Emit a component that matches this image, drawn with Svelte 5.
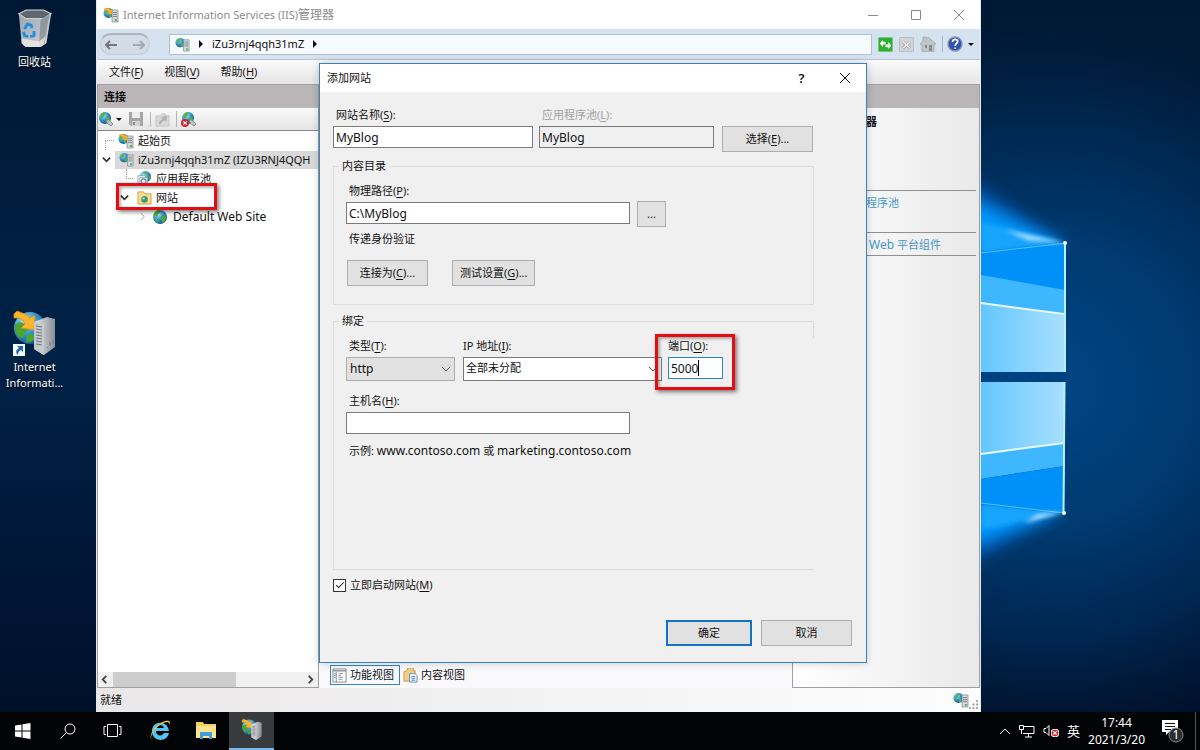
<script>
	let siteName = $state('MyBlog');
	let pool = $state('MyBlog');
	let path = $state('C:\\MyBlog');
	let type = $state('http');
	let ip = $state('全部未分配');
	let port = $state('5000');
	let host = $state('');
	let startNow = $state(true);

	const menus = [
		['文件', 'F'],
		['视图', 'V'],
		['帮助', 'H']
	];
</script>

{#snippet icon(name, size)}
	<svg class="icon" width={size} height={size} aria-hidden="true"><use href="#{name}" /></svg>
{/snippet}

{#snippet key(text, k, tail = '')}{text}(<u>{k}</u>){tail}{/snippet}

<svg class="defs" aria-hidden="true">
	<defs>
		<radialGradient id="sea" cx="35%" cy="30%" r="75%">
			<stop offset="0" stop-color="#b5ecfb" />
			<stop offset="0.5" stop-color="#3497d2" />
			<stop offset="1" stop-color="#164e97" />
		</radialGradient>
		<linearGradient id="metal" x1="0" x2="1" y1="0" y2="0">
			<stop offset="0" stop-color="#e6e8ea" />
			<stop offset="1" stop-color="#8b9095" />
		</linearGradient>
		<linearGradient id="bin" x1="0" x2="1" y1="0" y2="1">
			<stop offset="0" stop-color="#9aa2ab" />
			<stop offset="0.6" stop-color="#b9bfc5" />
			<stop offset="1" stop-color="#e3e3e1" />
		</linearGradient>
	</defs>
	<symbol id="globe" viewBox="0 0 16 16">
		<circle cx="8" cy="8" r="7" fill="url(#sea)" />
		<path d="M3 3c2-2 5-2 6-1L8 4 6 5 5 8 2 7c-1-1 0-3 1-4zM9 7l3-1 2 2-1 4-2 2-2-3zM4 10l3 1-1 3-3-2z" fill="#4eaa3c" />
	</symbol>
	<symbol id="tower" viewBox="0 0 16 16">
		<circle cx="5.500" cy="6" r="5" fill="url(#sea)" />
		<path d="M2 4c1-2 3-3 4-2L5 5 4 6 2 7zM6 7l3 0-1 3-2 0z" fill="#52b54a" />
		<path d="M9 3h6v12H9z" fill="#d3d8db" stroke="#7b858c" stroke-width="0.7" />
		<path d="M10 5.500h4M10 7.500h4M10 9.500h4" stroke="#7b878e" />
		<path d="M12 12h2v2h-2z" fill="#4dbb46" />
	</symbol>
	<symbol id="towerarrow" viewBox="0 0 16 16">
		<use href="#tower" />
		<path d="M1 2l4-1 3 2 1-1v5H5l1-2-2-1z" fill="#f4b32c" stroke="#d98a10" stroke-width="0.4" />
	</symbol>
	<symbol id="iis" viewBox="0 0 44 50">
		<circle cx="17" cy="19" r="16" fill="url(#sea)" />
		<path d="M2 16c5-6 8 0 12-1s4 6 0 7-2 8-6 7-7-7-6-13zM14 26c5-3 7 0 7 3s-5 6-8 4z" fill="#4aa62f" />
		<path d="M1 5l3-3c5 2 10 3 13 7l5-3-1 15-13-2 4-4C10 11 8 9 5 9H1z" fill="#f9b52d" stroke="#d58811" stroke-width="0.8" />
		<path d="M21 13l13-5 8 2v28l-11 8-10-6z" fill="url(#metal)" />
		<path d="M21 13l10 2v31l-10-6z" fill="#c7cacd" />
		<path d="M23 17l6 1M23 20l6 1M23 23l6 1M23 26l6 1M23 29l6 1M23 32l6 1M23 35l6 1" stroke="#6d7378" />
		<path d="M34 38l1 1M37 33v4M40 31v4" stroke="#747a80" />
	</symbol>
	<symbol id="recycle" viewBox="0 0 38 42">
		<path d="M2 5L10 1h18l8 4-5 31-6 4H9l-4-4z" fill="url(#bin)" />
		<path d="M2 5l8-4h18l8 4-8 5H9z" fill="#60666d" stroke="#cdd2d6" stroke-width="1.2" />
		<path d="M25 11l9-5-5 30-6 3z" fill="#7f878f" opacity="0.7" />
		<path d="M5 31l18 3 7-5-2 8-5 3H9l-4-4z" fill="#eceae6" opacity="0.8" />
		<path d="M8 21l3-5 4 1 1 3M7 24l1 4 4 1M14 29l4-1 0-5" fill="none" stroke="#218ee0" stroke-width="3" />
	</symbol>
	<symbol id="connect" viewBox="0 0 16 16">
		<circle cx="7" cy="7" r="6" fill="url(#sea)" />
		<path d="M3 3c2-2 4-2 5-1L6 5 5 7 2 7zM8 6l3 0 1 3-3 2z" fill="#52b54a" />
		<path d="M8 9l3 0 4 4-2 2-4-3z" fill="#bdc9bc" stroke="#5f7d6c" stroke-width="0.7" />
	</symbol>
	<symbol id="cross" viewBox="0 0 8 8">
		<circle cx="4" cy="4" r="4" fill="#d7222e" />
		<path d="M2.3 2.3l3.4 3.4M5.7 2.3L2.3 5.7" stroke="#fff" stroke-width="1.2" />
	</symbol>
	<symbol id="disconnect" viewBox="0 0 16 16">
		<use href="#connect" />
		<use href="#cross" x="0" y="8" width="8" height="8" />
	</symbol>
	<symbol id="save" viewBox="0 0 16 16">
		<path d="M1 1h14v14H3l-2-2z" fill="#a6a6a6" />
		<path d="M4 1h8v6H4z" fill="#ececec" />
		<path d="M4 10h8v5H4z" fill="#d4d4d4" />
		<path d="M5 11h2v3H5z" fill="#8c8c8c" />
	</symbol>
	<symbol id="up" viewBox="0 0 16 16">
		<path d="M1 4h5l1-2h4v2h4v11H1z" fill="#d9d9d9" stroke="#c6c6c6" />
		<path d="M4 13c0-3 2-4 4-6L6 5l7-1-1 6-2-1c-2 1-3 2-4 4z" fill="#b3b3b3" />
	</symbol>
	<symbol id="pool" viewBox="0 0 16 16">
		<circle cx="9" cy="6" r="6" fill="url(#sea)" />
		<path d="M6 2c2-2 5-1 5 0L9 4zM12 5l3 1-2 4z" fill="#52b54a" />
		<path d="M1 5h8v9H1z" fill="#f5f8fa" stroke="#9aa9b4" />
		<path d="M3 7h8v8H3z" fill="#fff" stroke="#9aa9b4" />
		<circle cx="7" cy="11" r="2.5" fill="none" stroke="#5f9ac2" stroke-width="1.4" />
	</symbol>
	<symbol id="sites" viewBox="0 0 16 16">
		<path d="M1 2h6l1 2h7v11H1z" fill="#f8dd90" stroke="#cfa23c" />
		<circle cx="8" cy="10" r="3.5" fill="#3a9a76" />
		<circle cx="7" cy="9" r="1.2" fill="#bfe8dc" />
	</symbol>
	<symbol id="refresh" viewBox="0 0 16 16">
		<rect x="0.5" y="0.5" width="15" height="15" rx="1" fill="#27b32c" stroke="#89b889" />
		<path d="M2 7l3-4v2h3v3H5v3zM14 9l-3 4v-2H8V8h3V5z" fill="#fff" />
	</symbol>
	<symbol id="stop" viewBox="0 0 16 16">
		<rect x="0.5" y="0.5" width="15" height="15" rx="1" fill="#d2d5d8" stroke="#b6babd" />
		<path d="M4 5l8 7M12 5l-8 7" stroke="#909497" stroke-width="3" />
		<path d="M4 5l8 7M12 5l-8 7" stroke="#eceeef" stroke-width="1.6" />
	</symbol>
	<symbol id="home" viewBox="0 0 16 16">
		<path d="M0 8l3-3V1h3v2l2-2 8 7-2 1v7H2V9z" fill="#c1c5c8" stroke="#979b9e" stroke-width="0.7" />
		<path d="M5 9h2v3H5zM9 9h3v6H9z" fill="#85898c" />
	</symbol>
	<symbol id="help" viewBox="0 0 16 16">
		<circle cx="8" cy="8" r="7" fill="#3152b4" stroke="#8793b5" stroke-width="1.4" />
		<path d="M5.5 6c0-3.500 5.500-3.300 5.200-.3C10.500 7.500 8.200 7.600 8.200 10M8.200 11.500v1.500" fill="none" stroke="#fff" stroke-width="1.7" />
	</symbol>
	<symbol id="features" viewBox="0 0 16 16">
		<path d="M1 1h14v14H1z" fill="#fff" stroke="#84898d" />
		<path d="M1 3h14" stroke="#84898d" stroke-width="1.4" />
		<path d="M4.500 4v11" stroke="#84898d" />
		<path d="M2 6h2M2 8h2M2 10h2M7 6h5M7 8h3M7 10h5M7 12h4" stroke="#7f8fa0" />
	</symbol>
	<symbol id="contents" viewBox="0 0 16 16">
		<path d="M1 4l3-1 1-3h6v3h2v9l-8 2H1z" fill="#f1ce86" stroke="#c69c4c" />
		<path d="M7 6h6l2 2v7H7z" fill="#eef6ff" stroke="#698fb6" />
		<path d="M9 9h4M9 11h4M9 13h4" stroke="#4f83bb" />
	</symbol>
</svg>

<div class="desktop">
	<svg class="wallpaper" viewBox="0 0 1200 712" preserveAspectRatio="xMaxYMin slice" aria-hidden="true">
		<defs>
			<linearGradient id="night" x1="0" x2="0" y1="0" y2="1">
				<stop offset="0" stop-color="#001833" />
				<stop offset="0.5" stop-color="#002247" />
				<stop offset="0.85" stop-color="#001434" />
				<stop offset="1" stop-color="#001029" />
			</linearGradient>
			<radialGradient id="halo" gradientUnits="userSpaceOnUse" cx="1050" cy="385" r="360">
				<stop offset="0" stop-color="#004685" />
				<stop offset="0.4" stop-color="#003a70" />
				<stop offset="0.7" stop-color="#002f5e" stop-opacity="0.7" />
				<stop offset="1" stop-color="#00244c" stop-opacity="0" />
			</radialGradient>
			<linearGradient id="pane" x1="0" x2="1" y1="0" y2="0">
				<stop offset="0" stop-color="#62c6ff" />
				<stop offset="1" stop-color="#a9e0ff" />
			</linearGradient>
			<filter id="soft" x="-30%" y="-60%" width="160%" height="220%"><feGaussianBlur stdDeviation="8" /></filter>
			<filter id="beam" x="-30%" y="-60%" width="160%" height="220%"><feGaussianBlur stdDeviation="2" /></filter>
		</defs>
		<rect width="1200" height="712" fill="url(#night)" />
		<rect x="600" width="600" height="712" fill="url(#halo)" />
		<path d="M1064 247L930 150v110zM1062 510l-132 78v-90z" fill="#0062c4" opacity="0.7" filter="url(#soft)" />
		<path d="M1066 245L930 180v80zM1064 511l-134 50v-60z" fill="#0098ff" filter="url(#soft)" />
		<path d="M1066 243l-85-21v31zM1064 513l-83-10v27z" fill="#13a4ff" filter="url(#beam)" />
		<path d="M981 253l85-10v129h-85z" fill="#0090fa" />
		<path d="M981 275l84 15v82h-84z" fill="#3eb7ff" />
		<path d="M981 303l84 12v57h-84z" fill="url(#pane)" />
		<path d="M981 382h84v61l-84 11z" fill="url(#pane)" />
		<path d="M981 454l84-11v23l-84 13z" fill="#3eb7ff" />
		<path d="M981 479l84-13-1 47-83-10z" fill="#0090fa" />
		<path d="M970 372h97v10h-97z" fill="#00417f" />
		<path d="M981 253l85-10M981 503l83 10" stroke="#4dc2ff" />
		<path d="M981 303l83 11M981 454l83-11" stroke="#e8f8ff" stroke-width="2" />
		<path d="M1065 243v129M1064.500 382l-1 131" stroke="#b8f0fa" stroke-width="2" />
		<path d="M1005 230l61 13-38-3zM1064 512l-40 11 14-9z" fill="#b5e4ff" filter="url(#beam)" />
		<circle cx="1065" cy="243" r="2" fill="#fff" />
		<circle cx="1064" cy="513" r="2" fill="#fff" />
	</svg>

	<button class="shortcut bin">
		{@render icon('recycle', 40)}
		<span>回收站</span>
	</button>
	<button class="shortcut manager">
		<span class="picture">
			{@render icon('iis', 50)}
			<svg class="link" viewBox="0 0 12 12" width="12" height="12" aria-hidden="true">
				<path d="M0 0h12v12H0z" fill="#f4f8fc" />
				<path d="M4 2h6v6L8 6c-2 1-3 2-3 5-3-3-2-5 1-7z" fill="#2167ad" />
			</svg>
		</span>
		<span>Internet Informati...</span>
	</button>

	<main class="window">
		<header class="titlebar">
			{@render icon('towerarrow', 16)}
			<h1>Internet Information Services (IIS)<span class="cjk">管理器</span></h1>
			<div class="caption">
				<button aria-label="最小化"><svg viewBox="0 0 10 10"><path d="M0 5.500h10" /></svg></button>
				<button aria-label="最大化"><svg viewBox="0 0 10 10"><path d="M.5.5h9v9h-9z" /></svg></button>
				<button aria-label="关闭"><svg viewBox="0 0 10 10"><path d="M0 0l10 10M10 0L0 10" /></svg></button>
			</div>
		</header>

		<div class="addressbar">
			<div class="history">
				<button aria-label="后退"><svg viewBox="0 0 12 10"><path d="M5 1L1 5l4 4M1 5h11" /></svg></button>
				<button class="off" aria-label="前进"><svg viewBox="0 0 12 10"><path d="M7 1l4 4-4 4M11 5H0" /></svg></button>
			</div>
			<nav class="address">
				{@render icon('tower', 15)}
				<i class="tri"></i>
				<span>iZu3rnj4qqh31mZ</span>
				<i class="tri"></i>
			</nav>
			<div class="tools">
				<button aria-label="刷新">{@render icon('refresh', 15)}</button>
				<button aria-label="停止">{@render icon('stop', 15)}</button>
				<button aria-label="主页">{@render icon('home', 16)}</button>
				<button class="help" aria-label="帮助">{@render icon('help', 16)}<i class="drop"></i></button>
			</div>
		</div>

		<nav class="menubar">
			{#each menus as [text, k] (k)}
				<button>{@render key(text, k)}</button>
			{/each}
		</nav>

		<div class="panes">
			<section class="connections">
				<h2 class="head">连接</h2>
				<div class="toolbar">
					<button aria-label="连接">{@render icon('connect', 16)}<i class="drop"></i></button>
					<button aria-label="保存">{@render icon('save', 16)}</button>
					<button class="sep" aria-label="向上">{@render icon('up', 15)}</button>
					<button class="sep" aria-label="断开">{@render icon('disconnect', 16)}</button>
				</div>
				<ul class="tree">
					<li class="l1"><i class="dots"></i>{@render icon('towerarrow', 16)}<span>起始页</span></li>
					<li class="l1 open">
						<svg class="chev" viewBox="0 0 10 10"><path d="M1 3l4 4 4-4" /></svg>
						<div class="selected">{@render icon('tower', 15)}<span>iZu3rnj4qqh31mZ (IZU3RNJ4QQH</span></div>
					</li>
					<li class="l2"><i class="dots"></i>{@render icon('pool', 15)}<span>应用程序池</span></li>
					<li class="l2 open">
						<svg class="chev" viewBox="0 0 10 10"><path d="M1 3l4 4 4-4" /></svg>
						{@render icon('sites', 15)}<span>网站</span>
						<i class="mark"></i>
					</li>
					<li class="l3">
						<svg class="chev closed" viewBox="0 0 10 10"><path d="M3 1l4 4-4 4" /></svg>
						{@render icon('globe', 16)}<span class="latin">Default Web Site</span>
					</li>
				</ul>
				<div class="scroll">
					<svg viewBox="0 0 10 10"><path d="M7 1L3 5l4 4" /></svg>
					<div class="track"><div class="thumb"></div></div>
					<svg viewBox="0 0 10 10"><path d="M3 1l4 4-4 4" /></svg>
				</div>
			</section>

			<section class="center">
				<div class="head"></div>
				<div class="views">
					<button class="on">{@render icon('features', 15)}功能视图</button>
					<button>{@render icon('contents', 15)}内容视图</button>
				</div>
			</section>

			<aside class="actions">
				<div class="head"></div>
				<div class="body">
					<strong>器</strong>
					<a href="#pools">程序池</a>
					<a class="last" href="#platform"><span class="latin">Web</span> 平台组件</a>
				</div>
			</aside>
		</div>

		<footer class="status">
			<span>就绪</span>
			{@render icon('tower', 16)}
			<svg class="grip" viewBox="0 0 10 10"><path d="M8 0h2v2H8zM4 4h2v2H4zM8 4h2v2H8zM0 8h2v2H0zM4 8h2v2H4zM8 8h2v2H8z" /></svg>
		</footer>
	</main>

	<form class="dialog" onsubmit={(e) => e.preventDefault()}>
		<header>
			<h2>添加网站</h2>
			<button type="button" class="q" aria-label="帮助">?</button>
			<button type="button" aria-label="关闭"><svg viewBox="0 0 10 10"><path d="M0 0l10 10M10 0L0 10" /></svg></button>
		</header>

		<div class="content">
			<div class="row top">
				<div class="field name">
					<label for="name">{@render key('网站名称', 'S', ':')}</label>
					<input id="name" bind:value={siteName} />
				</div>
				<div class="field pool">
					<label for="apppool">{@render key('应用程序池', 'L', ':')}</label>
					<input id="apppool" bind:value={pool} readonly />
				</div>
				<button type="button" class="btn select">{@render key('选择', 'E', '...')}</button>
			</div>

			<fieldset class="directory">
				<legend>内容目录</legend>
				<div class="row path">
					<div class="field long">
						<label for="path">{@render key('物理路径', 'P', ':')}</label>
						<input id="path" bind:value={path} />
					</div>
					<button type="button" class="btn browse">...</button>
				</div>
				<p class="note">传递身份验证</p>
				<div class="row auth">
					<button type="button" class="btn">{@render key('连接为', 'C', '...')}</button>
					<button type="button" class="btn">{@render key('测试设置', 'G', '...')}</button>
				</div>
			</fieldset>

			<fieldset class="binding">
				<legend>绑定</legend>
				<div class="row bind">
					<div class="field type">
						<label for="type">{@render key('类型', 'T', ':')}</label>
						<div class="combo">
							<select id="type" class="latin" bind:value={type}><option>http</option><option>https</option></select>
							<svg viewBox="0 0 10 10"><path d="M1 3l4 4 4-4" /></svg>
						</div>
					</div>
					<div class="field ip">
						<label for="ip">{@render key('IP 地址', 'I', ':')}</label>
						<div class="combo white">
							<select id="ip" bind:value={ip}><option>全部未分配</option></select>
							<svg viewBox="0 0 10 10"><path d="M1 3l4 4 4-4" /></svg>
						</div>
					</div>
					<div class="field port">
						<label for="port">{@render key('端口', 'O', ':')}</label>
						<input id="port" bind:value={port} />
						<i class="caret"></i>
						<i class="mark"></i>
					</div>
				</div>
				<div class="field long host">
					<label for="host">{@render key('主机名', 'H', ':')}</label>
					<input id="host" bind:value={host} />
				</div>
				<p class="note">示例: <span class="latin">www.contoso.com</span> 或 <span class="latin">marketing.contoso.com</span></p>
			</fieldset>

			<label class="check">
				<input type="checkbox" bind:checked={startNow} />
				<span>{@render key('立即启动网站', 'M')}</span>
			</label>

			<div class="buttons">
				<button class="btn ok">确定</button>
				<button type="button" class="btn cancel">取消</button>
			</div>
		</div>
	</form>

	<nav class="taskbar">
		<button aria-label="开始">
			<svg width="16" height="16" viewBox="0 0 16 16"><path d="M0 2.500l6.500-1v6H0zM7.500 1.300L15.500 0v7.500h-8zM0 8.500h6.500v6L0 13.500zM7.500 8.500h8V16l-8-1.300z" class="solid" /></svg>
		</button>
		<button aria-label="搜索">
			<svg width="16" height="16" viewBox="0 0 16 16"><circle cx="10" cy="6" r="5" /><path d="M6.500 9.500L.5 15.500" /></svg>
		</button>
		<button aria-label="任务视图">
			<svg width="20" height="16" viewBox="0 0 20 16"><path d="M4.500 1.500h10v12h-10zM3 3.500H1v8h2M16 3.500h2v8h-2" /></svg>
		</button>
		<button class="app first" aria-label="Internet Explorer">
			<svg width="22" height="22" viewBox="0 0 22 22">
				<path d="M20 12H7c0 5 6 6 8 2h5c-2 10-17 9-17-2S19 1 20 12zM7 9h8c-1-4-7-4-8 0z" fill="#55c4f2" />
				<path d="M3 21C-3 15 13-1 20 2c2 1 0 4 0 4 1-5-5-3-9 0C5 10 0 18 3 21z" fill="#f6c93b" />
			</svg>
		</button>
		<button class="app" aria-label="文件资源管理器">
			<svg width="22" height="18" viewBox="0 0 22 18">
				<path d="M1 1h7l1 2h12v14H1z" fill="#f4cf62" />
				<path d="M1 5h20v12H1z" fill="#fde48f" />
				<path d="M5 18v-7h12v7h-3v-3H8v3z" fill="#3f9edb" />
			</svg>
		</button>
		<button class="app on" aria-label="IIS">{@render icon('iis', 24)}</button>
		<div class="tray">
			<svg width="12" height="8" viewBox="0 0 12 8"><path d="M1 7l5-5 5 5" /></svg>
			<svg width="16" height="14" viewBox="0 0 16 14"><path d="M5 2.500h10v7H4M9.500 10v3M6 13h7M.5 1.500h4v4h-4zM2.500 6v4" /></svg>
			<svg width="16" height="14" viewBox="0 0 16 14"><path d="M1 4.500h2l3-3v10l-3-3H1z" /><use href="#cross" x="8" y="5" width="8" height="8" /></svg>
			<span class="lang">英</span>
			<div class="clock latin"><span>17:44</span><span>2021/3/20</span></div>
			<button aria-label="通知">
				<svg width="26" height="26" viewBox="0 0 26 26">
					<path d="M1 2h16v12H8l-3 3v-3H1z" fill="#fff" />
					<path d="M4 5.500h10M4 8.500h10M4 11.500h6" class="lines" />
					<circle cx="15" cy="17" r="7" fill="#2b2d30" class="ring" />
					<text x="15" y="21" text-anchor="middle" class="count">1</text>
				</svg>
			</button>
			<i class="peek"></i>
		</div>
	</nav>
</div>

<style>
	:global(body) {
		margin: 0;
		font-family: 'Noto Sans', 'Noto Sans CJK SC', sans-serif;
		font-size: 11px;
		line-height: 16px;
		color: #111;
	}
	h1,
	h2,
	p,
	ul {
		margin: 0;
		padding: 0;
		font-size: 11px;
		font-weight: 400;
	}
	button,
	input,
	select {
		font: inherit;
		color: inherit;
		margin: 0;
		box-sizing: border-box;
	}
	button {
		display: flex;
		align-items: center;
		justify-content: center;
		background: none;
		border: 0;
		padding: 0;
	}
	svg {
		flex: none;
		fill: none;
	}
	u {
		text-underline-offset: 2px;
	}
	.latin,
	.cjk {
		font-size: 12px;
	}
	.defs {
		position: absolute;
		width: 0;
		height: 0;
	}
	.desktop {
		position: relative;
		height: 100vh;
		overflow: hidden;
		display: flex;
		flex-direction: column;
		justify-content: flex-end;
		background: #001833;
	}
	.wallpaper {
		position: absolute;
		inset: 0 0 38px;
		width: 100%;
		height: calc(100% - 38px);
	}

	/* desktop shortcuts */
	.shortcut {
		position: absolute;
		left: 0;
		width: 69px;
		flex-direction: column;
		gap: 5px;
		color: #fff;
		text-align: center;
		text-shadow: 0 1px 2px #000;
	}
	.bin {
		top: 9px;
	}
	.manager {
		top: 309px;
		gap: 0;
	}
	.picture {
		position: relative;
		display: flex;
	}
	.link {
		position: absolute;
		left: 3px;
		bottom: 3px;
	}

	/* IIS window */
	.window {
		position: absolute;
		left: 96px;
		right: 219px;
		top: 0;
		bottom: 38px;
		box-sizing: border-box;
		display: flex;
		flex-direction: column;
		background: #f0f0f0;
		border: 1px solid #e4e8ec;
		border-width: 0 1px 0 1px;
	}
	.titlebar {
		display: flex;
		align-items: center;
		height: 29px;
		padding-left: 6px;
		gap: 4px;
		background: #fff;
		color: #8c8c8c;
	}
	.caption {
		margin-left: auto;
		display: flex;
	}
	.caption button {
		width: 43px;
		height: 28px;
	}
	.caption svg {
		width: 10px;
		height: 10px;
		stroke: #888;
	}
	.addressbar {
		display: flex;
		align-items: center;
		height: 30px;
		background: #d5e3f1;
		border-bottom: 1px solid #b9c5d2;
	}
	.history {
		display: flex;
		justify-content: space-between;
		width: 50px;
		height: 22px;
		padding: 0 4px;
		margin: 0 19px 0 3px;
		border: 1px solid #c3cdd7;
		border-top: 2px solid #a9b4bf;
		border-radius: 12px;
		box-sizing: border-box;
		background: #d3dce6;
	}
	.history svg {
		width: 12px;
		height: 10px;
		stroke: #71777d;
		stroke-width: 2;
	}
	.history .off svg {
		stroke: #a2aab2;
	}
	.address {
		flex: 1;
		display: flex;
		align-items: center;
		gap: 9px;
		height: 19px;
		padding-left: 5px;
		background: #f7fafd;
		border: 1px solid #b2bfcc;
	}
	.tri {
		border-left: 4px solid #111;
		border-top: 4px solid transparent;
		border-bottom: 4px solid transparent;
	}
	.tools {
		display: flex;
		align-items: center;
		gap: 6px;
		padding: 0 6px;
	}
	.help {
		gap: 5px;
		padding-left: 4px;
		border-left: 1px solid #aab7c4;
	}
	.drop {
		border-top: 3px solid #111;
		border-left: 3px solid transparent;
		border-right: 3px solid transparent;
	}
	.menubar {
		display: flex;
		gap: 21px;
		height: 24px;
		padding-left: 12px;
		background: linear-gradient(#fbfbfb, #e6e4e4);
	}
	.panes {
		flex: 1;
		display: flex;
		min-height: 0;
	}
	.head {
		height: 24px;
		line-height: 24px;
		box-sizing: border-box;
		border-top: 1px solid #a3a1a1;
		background: #bab6b7;
		font-weight: 700;
		padding-left: 6px;
		flex: none;
	}
	.connections {
		flex: none;
		width: 222px;
		display: flex;
		flex-direction: column;
		box-sizing: border-box;
		border: 1px solid #9f9f9f;
		border-top: 0;
		background: #fff;
	}
	.toolbar {
		display: flex;
		align-items: center;
		gap: 6px;
		height: 22px;
		border-bottom: 1px solid #84888c;
		background: linear-gradient(#fafafa, #e5e5e5);
	}
	.toolbar button {
		gap: 2px;
	}
	.toolbar .sep {
		padding-left: 4px;
		border-left: 1px solid #b5b5b5;
	}
	.tree {
		flex: 1;
		list-style: none;
		overflow: hidden;
	}
	.tree li {
		position: relative;
		display: flex;
		align-items: center;
		gap: 4px;
		height: 19px;
		white-space: nowrap;
	}
	.tree .l1 {
		padding-left: 7px;
	}
	.tree .l1.open {
		padding-left: 4px;
	}
	.tree .l2 {
		padding-left: 28px;
	}
	.tree .l2.open {
		padding-left: 22px;
	}
	.tree .l3 {
		padding-left: 40px;
		gap: 5px;
	}
	.dots {
		width: 8px;
		height: 9px;
		align-self: flex-end;
		border: 1px dotted #999;
		border-width: 1px 0 0 1px;
	}
	.l2 .dots {
		width: 6px;
		align-self: flex-start;
		border-width: 0 0 1px 1px;
	}
	.selected {
		display: flex;
		align-items: center;
		gap: 4px;
		flex: 1;
		padding-left: 4px;
		height: 18px;
		background: #d9d9d9;
	}
	.chev {
		width: 9px;
		height: 9px;
		stroke: #333;
		stroke-width: 2;
	}
	.chev.closed {
		stroke: #a0a0a0;
		stroke-width: 1;
	}
	.l2 .chev {
		margin-right: 4px;
	}
	.mark {
		position: absolute;
		box-sizing: border-box;
		border: 3px solid #e30d12;
		box-shadow:
			2px 2px 4px rgba(0, 0, 0, 0.5),
			inset 2px 2px 3px rgba(0, 0, 0, 0.3);
		z-index: 2;
	}
	.tree .mark {
		left: 18px;
		top: -5px;
		width: 101px;
		height: 27px;
	}
	.scroll {
		display: flex;
		align-items: center;
		gap: 4px;
		padding: 0 3px 0 2px;
		height: 15px;
		background: #f0f0f0;
	}
	.scroll svg {
		width: 9px;
		height: 9px;
		stroke: #444;
		stroke-width: 2;
	}
	.track {
		flex: 1;
		height: 100%;
	}
	.thumb {
		width: 65%;
		height: 100%;
		background: #cdcdcd;
	}
	.center {
		flex: 1;
		display: flex;
		flex-direction: column;
		justify-content: space-between;
		background: #f9f9fb;
	}
	.views {
		display: flex;
		gap: 1px;
		padding: 0 11px 3px;
	}
	.views button {
		gap: 3px;
		height: 20px;
		padding: 0 5px 0 1px;
		border: 1px solid transparent;
	}
	.views .on {
		border-color: #3980c4;
		background: #f5fafe;
	}
	.actions {
		flex: none;
		width: 188px;
		box-sizing: border-box;
		display: flex;
		flex-direction: column;
		border: 1px solid #9f9f9f;
		border-top: 0;
		background: linear-gradient(90deg, #fff, #e9e9e9);
	}
	.body {
		display: flex;
		flex-direction: column;
		padding: 6px 3px 0 73px;
	}
	.body a {
		box-sizing: border-box;
		height: 42px;
		padding-top: 4px;
		border-top: 1px solid #8f8f8f;
		color: #4796c6;
		text-decoration: none;
	}
	.body strong {
		height: 76px;
	}
	.body a.last {
		height: 24px;
		padding-left: 3px;
		border-bottom: 1px solid #8f8f8f;
	}
	.status {
		display: flex;
		align-items: center;
		height: 24px;
		padding: 0 2px 0 3px;
		background: linear-gradient(90deg, #e9e7e8, #fdfdfd);
	}
	.status .icon {
		margin-left: auto;
	}
	.grip {
		width: 9px;
		height: 9px;
		fill: #999;
		align-self: flex-end;
		padding-bottom: 3px;
	}

	/* add-website dialog */
	.dialog {
		position: absolute;
		left: 319px;
		top: 63px;
		width: 548px;
		box-sizing: border-box;
		border: 1px solid #3483c6;
		background: #f0f0f0;
		box-shadow: 0 0 8px rgba(0, 0, 0, 0.2);
	}
	.dialog header {
		display: flex;
		align-items: center;
		height: 28px;
		padding-left: 7px;
		background: #fff;
	}
	.dialog h2 {
		margin-right: auto;
	}
	.dialog header button {
		width: 43px;
		height: 26px;
	}
	.dialog header svg {
		width: 10px;
		height: 10px;
		stroke: #111;
	}
	.q {
		font-size: 13px;
		font-weight: 600;
	}
	.content {
		padding: 15px 14px 16px 13px;
	}
	.row {
		display: flex;
	}
	.field {
		display: flex;
		flex-direction: column;
		gap: 3px;
	}
	.field label {
		padding-left: 3px;
	}
	.field input {
		height: 22px;
		padding: 0 2px;
		border: 1px solid #7a7a7a;
		background: #fff;
		font-size: 12px;
		outline: 0;
	}
	.btn {
		height: 26px;
		border: 1px solid #adadad;
		background: #e1e1e1;
	}
	.name {
		width: 200px;
		margin-right: 6px;
	}
	.pool {
		width: 175px;
		margin-right: 8px;
	}
	.pool label {
		color: #a0a0a0;
	}
	.pool input {
		background: #f0f0f0;
	}
	.select {
		width: 91px;
		margin-top: 19px;
	}
	fieldset {
		margin: 0;
		width: 481px;
		box-sizing: border-box;
		border: 1px solid #dcdcdc;
	}
	legend {
		margin-left: -7px;
		padding: 0 3px;
	}
	.directory {
		margin-top: 6px;
		padding: 9px 12px 18px;
	}
	.long {
		width: 284px;
	}
	.browse {
		width: 29px;
		margin: 18px 0 0 7px;
	}
	.note {
		padding-left: 3px;
	}
	.directory .note {
		margin: 4px 0 13px;
	}
	.auth {
		gap: 24px;
		padding-left: 1px;
	}
	.auth .btn {
		padding: 0 7px;
		min-width: 81px;
	}
	.binding {
		position: relative;
		margin-top: 8px;
		padding: 9px 12px 110px;
		border-right: 0;
	}
	.binding::after {
		content: '';
		position: absolute;
		right: 0;
		top: -8px;
		height: 17px;
		border-right: 1px solid #dcdcdc;
	}
	.type {
		width: 109px;
		margin-right: 8px;
	}
	.ip {
		width: 199px;
		margin-right: 6px;
	}
	.ip label {
		padding-left: 0;
	}
	.port {
		position: relative;
		width: 55px;
	}
	.port label {
		padding-left: 0;
		white-space: nowrap;
	}
	.port input {
		border-color: #2f86cf;
	}
	.caret {
		position: absolute;
		left: 30px;
		top: 22px;
		height: 16px;
		border-left: 1px solid #000;
	}
	.port .mark {
		left: -13px;
		top: -4px;
		width: 80px;
		height: 56px;
	}
	.combo {
		position: relative;
		display: flex;
	}
	.combo select {
		appearance: none;
		width: 100%;
		height: 24px;
		padding: 0 3px;
		border: 1px solid #adadad;
		border-radius: 0;
		background: #e1e1e1;
	}
	.combo.white select {
		border-color: #7a7a7a;
		background: #fff;
		padding: 0 2px 2px;
	}
	.combo svg {
		position: absolute;
		right: 4px;
		top: 7px;
		width: 10px;
		height: 10px;
		stroke: #555;
	}
	.host {
		margin: 12px 0 9px;
	}
	.check {
		display: flex;
		align-items: center;
		gap: 4px;
		margin-top: 7px;
	}
	.check input {
		appearance: none;
		width: 13px;
		height: 13px;
		border: 1px solid #333;
		background: #fff;
		display: grid;
		place-items: center;
	}
	.check input:checked::after {
		content: '';
		width: 7px;
		height: 3px;
		border: solid #222;
		border-width: 0 0 1px 1px;
		transform: translateY(-1px) rotate(-45deg);
	}
	.buttons {
		display: flex;
		justify-content: flex-end;
		gap: 9px;
		margin-top: 27px;
	}
	.ok {
		width: 86px;
		border: 2px solid #1272c8;
	}
	.cancel {
		width: 91px;
	}

	/* taskbar */
	.taskbar {
		position: relative;
		display: flex;
		height: 38px;
		background: #020305;
		color: #fff;
	}
	.taskbar svg {
		stroke: #fff;
		stroke-width: 1;
	}
	.taskbar .solid {
		fill: #fff;
		stroke: none;
	}
	.taskbar > button {
		width: 45px;
	}
	.taskbar .app {
		margin-right: 1px;
		box-sizing: border-box;
		border-bottom: 2px solid transparent;
	}
	.taskbar .app svg,
	.tray button svg {
		stroke: none;
	}
	.taskbar .first {
		margin-left: 2px;
	}
	.taskbar .on {
		background: #383b3e;
		border-color: #76b9ed;
	}
	.tray {
		margin-left: auto;
		display: flex;
		align-items: center;
		gap: 8px;
	}
	.lang {
		font-size: 13px;
	}
	.clock {
		display: flex;
		flex-direction: column;
		align-items: center;
		line-height: 17px;
		margin-right: 8px;
	}
	.lines {
		stroke: #111;
	}
	.ring {
		stroke: #85888b;
	}
	.count {
		fill: #fff;
		font-size: 12px;
	}
	.peek {
		height: 100%;
		margin-right: 4px;
		border-left: 1px solid #555;
	}
</style>
